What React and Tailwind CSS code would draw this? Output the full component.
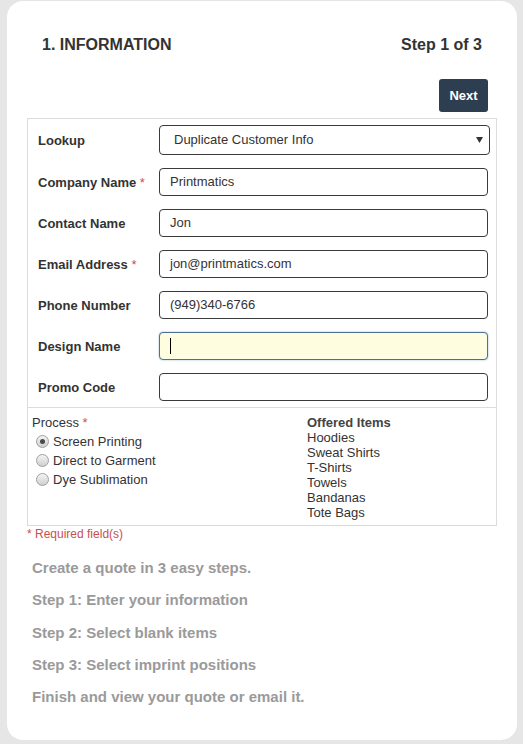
const fields = [
    { label: 'Company Name', required: true, value: 'Printmatics' },
    { label: 'Contact Name', value: 'Jon' },
    { label: 'Email Address', required: true, value: 'jon@printmatics.com' },
    { label: 'Phone Number', value: '(949)340-6766' },
    { label: 'Design Name', value: '', focused: true },
    { label: 'Promo Code', value: '' },
];

const processes = [
    { name: 'Screen Printing', checked: true },
    { name: 'Direct to Garment' },
    { name: 'Dye Sublimation' },
];

const offeredItems = ['Hoodies', 'Sweat Shirts', 'T-Shirts', 'Towels', 'Bandanas', 'Tote Bags'];

const steps = [
    'Create a quote in 3 easy steps.',
    'Step 1: Enter your information',
    'Step 2: Select blank items',
    'Step 3: Select imprint positions',
    'Finish and view your quote or email it.',
];

function Radio({ checked }) {
    return (
        <span className="w-[13px] h-[13px] rounded-full border border-[#a0a0a0] bg-gradient-to-b from-[#f4f4f4] to-[#cfcfcf] flex items-center justify-center shrink-0">
            {checked && <span className="w-[5px] h-[5px] rounded-full bg-[#4a4a4a]" />}
        </span>
    );
}

function Label({ text, required }) {
    return (
        <div className="w-[131px] pl-[10px] pt-[1px] text-[13px] font-bold text-[#333]">
            {text}
            {required && <span className="text-[#c9504d] font-normal"> *</span>}
        </div>
    );
}

export default function App() {
    return (
        <div className="min-h-screen bg-[#e6e6e6] pt-[1px] pl-[7px] pr-[6px] font-['Liberation_Sans',Arial,sans-serif]">
            <div className="bg-white rounded-[16px] h-[739px] px-[20px] pt-[34px]">
                {/* Header */}
                <div className="flex justify-between items-center px-[15px] text-[16px] leading-[20px] font-bold text-[#333]">
                    <span>1. INFORMATION</span>
                    <span>Step 1 of 3</span>
                </div>

                <div className="flex justify-end mt-[24px] mr-[9px]">
                    <button className="w-[49px] h-[33px] rounded-[3px] bg-[#2c3e50] text-white text-[13px] font-bold">
                        Next
                    </button>
                </div>

                {/* Form table */}
                <div className="mt-[6px] border border-[#dcdcdc]">
                    <div className="pt-[6px] pb-[6px] flex flex-col gap-[13px]">
                        <div className="flex items-center">
                            <Label text="Lookup" />
                            <div className="w-[331px] h-[30px] border border-[#3a3a3a] rounded-[4px] flex items-center justify-between pl-[14px] pr-[6px] text-[13px] text-[#333]">
                                <span>Duplicate Customer Info</span>
                                <svg width="7" height="6" viewBox="0 0 7 6">
                                    <polygon points="0,0 7,0 3.5,6" fill="#333" />
                                </svg>
                            </div>
                        </div>
                        {fields.map((f) => (
                            <div key={f.label} className="flex items-center">
                                <Label text={f.label} required={f.required} />
                                <div
                                    className={`w-[329px] h-[28px] rounded-[4px] flex items-center pl-[10px] text-[13px] text-[#333] ${
                                        f.focused
                                            ? 'bg-[#fffde0] border border-[#4d6f93] shadow-[0_0_2px_#8fb1d6]'
                                            : 'bg-white border border-[#3a3a3a]'
                                    }`}
                                >
                                    {f.focused ? <span className="w-[1px] h-[16px] bg-black" /> : f.value}
                                </div>
                            </div>
                        ))}
                    </div>

                    <div className="border-t border-[#dcdcdc] flex pt-[7px] pb-[5px] text-[13px] leading-[15px] text-[#333]">
                        <div className="w-[279px] pl-[4px]">
                            <div>
                                Process<span className="text-[#c9504d]"> *</span>
                            </div>
                            <div className="mt-[2px] flex flex-col">
                                {processes.map((p) => (
                                    <div key={p.name} className="flex items-center gap-[4px] h-[19px] pl-[4px]">
                                        <Radio checked={p.checked} />
                                        <span>{p.name}</span>
                                    </div>
                                ))}
                            </div>
                        </div>
                        <div>
                            <div className="font-bold text-[#444]">Offered Items</div>
                            {offeredItems.map((item) => (
                                <div key={item}>{item}</div>
                            ))}
                        </div>
                    </div>
                </div>

                <div className="text-[12px] leading-[14px] text-[#c9504d] pt-[1px]">* Required field(s)</div>

                {/* Steps */}
                <div className="mt-[18px] pl-[5px] flex flex-col gap-[14.3px] text-[15px] leading-[18px] font-bold text-[#9a9a9a]">
                    {steps.map((s) => (
                        <div key={s}>{s}</div>
                    ))}
                </div>
            </div>
        </div>
    );
}
